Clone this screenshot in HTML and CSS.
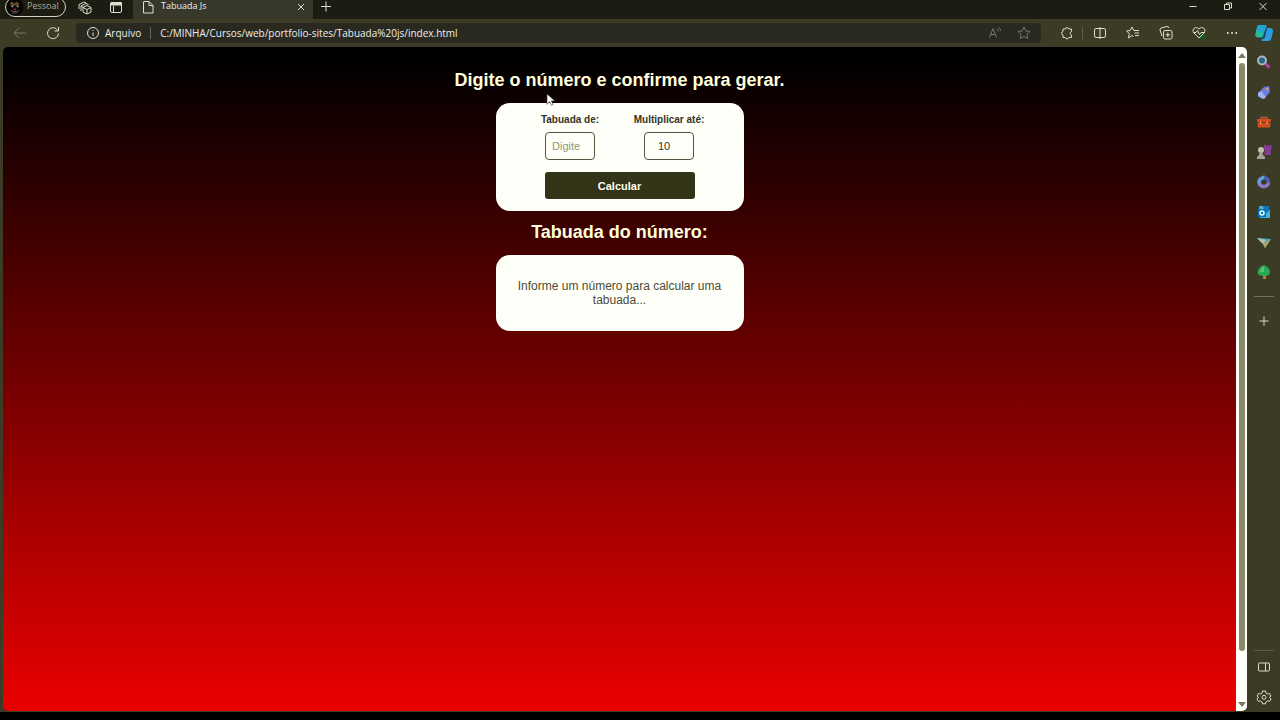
FILE: index.html
```html
<!DOCTYPE html>
<html lang="pt-BR">
<head>
<meta charset="utf-8">
<title>Tabuada Js</title>
<link rel="stylesheet" href="styles.css">
</head>
<body>
<header class="titlebar">
  <button class="profile" aria-label="Perfil Pessoal">
    <svg class="avatar" viewBox="0 0 20 20"><circle cx="10" cy="10" r="9.5" fill="#050505"/><path d="M4 6l3-2 2 2 3-2 3 3-2 2-3-1-3 2z" fill="#5d4a30"/><path d="M6 9l2 1M12 9l2 1" stroke="#b9b48a" stroke-width="1.300"/><path d="M8 12l2-.5 2 .5-1 1.500H9z" fill="#7c2430"/><path d="M5 14l3 1h4l3-1M7 16.500h6" fill="none" stroke="#62625a"/></svg>
    <span>Pessoal</span>
  </button>
  <button class="icon workspaces" aria-label="Espaços de trabalho"><svg viewBox="0 0 16 16"><path d="M6 7.500l4-2 4 2v4.500l-4 2-4-2zM6 7.500l4 2 4-2M10 9.500V14M4 11V6l5-2.500 2.500 1M2 9V4.500L7 2l2 .8M4 6l2 1.300"/></svg></button>
  <button class="icon tabs-menu" aria-label="Menu de guias"><svg viewBox="0 0 16 16"><rect x="2.500" y="2.500" width="11" height="10" rx="1.500"/><path d="M3 2.500h10.500v2.500H3z" fill="currentColor"/><path d="M5.500 6v6.500"/></svg></button>
  <div class="tab">
    <svg class="icon" viewBox="0 0 16 16"><path d="M4 1.500h5L13 5.500v7.500H3.500V1.500M9 1.500v4h4"/></svg>
    <span class="tab-name">Tabuada Js</span>
    <button class="icon" aria-label="Fechar guia"><svg viewBox="0 0 16 16"><path d="M5 4l6 6M11 4l-6 6"/></svg></button>
  </div>
  <button class="icon new-tab" aria-label="Nova guia"><svg viewBox="0 0 16 16"><path d="M8 1.500v10M3 6.500h10"/></svg></button>
  <div class="window-buttons">
    <button class="icon" aria-label="Minimizar"><svg viewBox="0 0 16 16"><path d="M4.500 6.500h7"/></svg></button>
    <button class="icon" aria-label="Restaurar"><svg viewBox="0 0 16 16"><path d="M4.500 4.500h5v5h-5zM6.500 4.500v-1.500h5v5h-2"/></svg></button>
    <button class="icon" aria-label="Fechar"><svg viewBox="0 0 16 16"><path d="M4.500 3l7 7M11.500 3l-7 7"/></svg></button>
  </div>
</header>

<div class="browser">
  <div class="content">
    <nav class="toolbar" aria-label="Navegação">
      <button class="icon dim" aria-label="Voltar"><svg viewBox="0 0 16 16"><path d="M14 8H2M7 3L2 8l5 5"/></svg></button>
      <button class="icon reload" aria-label="Atualizar"><svg viewBox="0 0 16 16"><path d="M12.800 5.500A5.500 5.500 0 1 0 13.500 8.500M13.500 2v4h-4"/></svg></button>
      <div class="address">
        <svg class="icon" viewBox="0 0 16 16"><circle cx="8" cy="8" r="5.500"/><path d="M8 7.500V11M8 5v1"/></svg>
        <span class="scheme">Arquivo</span>
        <input class="url" aria-label="Endereço" value="C:/MINHA/Cursos/web/portfolio-sites/Tabuada%20js/index.html">
        <button class="icon dim" aria-label="Ler em voz alta"><svg viewBox="0 0 16 16"><path d="M2.500 12.500L6 3.500l3.500 9M4 9.500h4M9.500 3.500q1.500 1 1.500 3M11.500 2q2 1.500 2 4"/></svg></button>
        <button class="icon dim" aria-label="Favoritar"><svg viewBox="0 0 16 16"><path d="M8 2l1.800 4 4.200.5-3.100 2.900.8 4.200L8 11.500l-3.700 2.100.8-4.200L2 6.500 6.200 6z"/></svg></button>
      </div>
      <div class="tools">
        <button class="icon" aria-label="Extensões"><svg viewBox="0 0 16 16"><path d="M4 4h2.300a1.800 1.800 0 0 1 3.500 0H12.500v2.500a1.800 1.800 0 0 0 0 3.500V12.500H9.800a1.800 1.800 0 0 1-3.500 0H4V10a1.800 1.800 0 0 1 0-3.500z"/></svg></button>
        <button class="icon split" aria-label="Tela dividida"><svg viewBox="0 0 16 16"><path d="M8 3.500H4q-1.500 0-1.500 1.500v6q0 1.500 1.500 1.500h8q1.500 0 1.500-1.500V5q0-1.500-1.500-1.500zM8 2v12"/></svg></button>
        <button class="icon" aria-label="Favoritos"><svg viewBox="0 0 16 16"><path d="M8.500 11.500l-1.500-1-3.500 2.500.8-4.500L1.500 6l3.700-.5L7 2l1.800 3.500H14M9.500 8H14M10 10.500h4"/></svg></button>
        <button class="icon" aria-label="Coleções"><svg viewBox="0 0 16 16"><rect x="5.500" y="5.500" width="8.500" height="8.500" rx="1.500"/><path d="M4 11L2 5q-.3-1.500 1-2l6-1.500q1.500-.3 2 1.500M9.800 7.500v4.500M7.500 9.800H12"/></svg></button>
        <button class="icon" aria-label="Desempenho"><svg viewBox="0 0 16 16"><circle cx="12" cy="12" r="3" fill="#185b20" stroke="none"/><path d="M8 13L3 8C0 4 5 .500 8 4c3-3.500 8 0 5 4L8 13M2.500 7.500H5l1.500-2 2 4 1.500-2h3.500"/></svg></button>
        <button class="icon" aria-label="Configurações e mais"><svg viewBox="0 0 16 16"><path d="M3 8h1.500M7.300 8h1.500M11.500 8H13" stroke-width="1.800"/></svg></button>
      </div>
    </nav>
    <div class="viewport">
      <main class="page">
        <h1 class="heading">Digite o número e confirme para gerar.</h1>
        <form class="card calculator">
          <div class="field"><label for="number">Tabuada de:</label><input id="number" type="text" placeholder="Digite"></div>
          <div class="field"><label for="limit">Multiplicar até:</label><input class="limit" id="limit" type="text" value="10"></div>
          <button class="calculate" type="button">Calcular</button>
        </form>
        <h2 class="heading">Tabuada do número:</h2>
        <section class="card result"><p>Informe um número para calcular uma tabuada...</p></section>
        <svg class="pointer" viewBox="0 0 10 16"><path d="M1 1v12l3-3 2 4 2-1-2-4h4z" fill="#fff" stroke="#333" stroke-width=".7"/></svg>
      </main>
      <div class="scrollbar" aria-hidden="true"><i class="arrow up"></i><i class="thumb"></i><i class="arrow down"></i></div>
    </div>
  </div>
  <aside class="sidebar" aria-label="Barra lateral">
    <button class="copilot" aria-label="Copilot"><svg viewBox="0 0 20 20"><path d="M5 2h6q2 0 1.500 2L10 12q-.7 2.500-3 2.500H4Q1 14.500 1.500 11L3 4q.5-2 2-2z" fill="#25a9c8"/><path d="M2 9l1.500-5.500Q4 2 6 2h5q1.500 0 1 2L9.500 10z" fill="#1fa3cf"/><path d="M1.500 11L3 7l6 4-1 3H4q-2.500 0-2.500-3z" fill="#27c08c"/><path d="M13 5h3.500q3 .5 2.500 3.500L17.500 15q-.7 3-3 3H9q-2 0-1.500-2h1q2 0 2.500-2z" fill="#2c9be0"/><path d="M11.500 6l1.700-1.500L10.500 14 8 16z" fill="#174b78"/></svg></button>
    <button class="app" aria-label="Pesquisar"><svg viewBox="0 0 16 16"><path d="M9.500 10l4 3.500" stroke="#b53aa8" stroke-width="3"/><circle cx="6" cy="6.500" r="4" fill="#286882" stroke="#a7b9bd" stroke-width="2"/></svg></button>
    <button class="app" aria-label="Compras"><svg viewBox="0 0 16 16"><path d="M2 9l6-6 5-1 1 6-5 6q-2 1-4 0L2 12z" fill="#7078df"/><path d="M2 9l3-2 5 6-2 2-3-1-3-2z" fill="#a0aef2"/><circle cx="11" cy="5" r="1.300" fill="#d0aa67"/></svg></button>
    <button class="app" aria-label="Ferramentas"><svg viewBox="0 0 16 16"><path d="M5 6V3.500h6V6" fill="none" stroke="#b4603e" stroke-width="1.500"/><path d="M1 5h14l-1 8.500H2z" fill="#d44d1f"/><path d="M1 8.500h14" stroke="#8f2711"/><path d="M4.500 7.500v2.500M11 7.500v2.500" stroke="#e2a472" stroke-width="1.300"/></svg></button>
    <button class="app" aria-label="Jogos"><svg viewBox="0 0 16 16"><path d="M8 1h2v1.500h1.500V1H13v1.500h1V1h1.500v4l-1 1 .5 5H8.500L9 6 8 5z" fill="#893b9c"/><circle cx="5" cy="6" r="3" fill="#bcc0ac"/><path d="M3.500 8h3l.5 3 2 2v2H1v-2l2-2z" fill="#a2a698"/></svg></button>
    <button class="app" aria-label="Microsoft 365"><svg viewBox="0 0 16 16"><g fill="none" stroke-width="3.500"><path d="M4 11Q1.500 7 5 4.500L9 3" stroke="#679ddd"/><path d="M8 3.500q4 .5 4.500 5" stroke="#4a62b8"/><path d="M12.500 8.500q0 3-4 4-3 .5-5-2.500" stroke="#8f78c8"/></g></svg></button>
    <button class="app" aria-label="Outlook"><svg viewBox="0 0 16 16"><path d="M3 2h10v4h1v8H4z" fill="#42b5dc"/><path d="M7 2h6v5l-4 3z" fill="#1475b8"/><path d="M2 5h8v8H2z" fill="#0871b8"/><circle cx="6" cy="9" r="2" fill="none" stroke="#e5ffff" stroke-width="1.500"/></svg></button>
    <button class="app" aria-label="Drop"><svg viewBox="0 0 16 16"><path d="M1 4l14 1-6 9-2-4z" fill="#47a4ca"/><path d="M1 4l9 2-3 4z" fill="#b7c5a4"/><path d="M7 10l8-5-6 9z" fill="#b9a457"/></svg></button>
    <button class="app" aria-label="Árvore"><svg viewBox="0 0 16 16"><path d="M7 10h3v5H7z" fill="#b77e35"/><path d="M8 1q6 3 6 7 0 4-6 4-6.500 0-6.500-4 1-5 6.500-7" fill="#2aa857"/><path d="M8 2q-4 3-4 6h4z" fill="#62c170"/></svg></button>
    <button class="icon customize" aria-label="Personalizar"><svg viewBox="0 0 16 16"><path d="M8 3.500v9M3.500 8h9"/></svg></button>
    <div class="sidebar-bottom">
      <button class="icon" aria-label="Ocultar barra lateral"><svg viewBox="0 0 16 16"><rect x="2.500" y="4" width="11" height="8" rx="1"/><path d="M9.500 4v8"/></svg></button>
      <button class="icon" aria-label="Configurações"><svg viewBox="0 0 16 16"><path d="M6.500 2h3l.5 2 1.500 1 2-.500L15 7l-1.500 1.200L15 10l-1.500 2.300-2-.5L10 13l-.5 1.800h-3L6 13l-1.500-1-2 .500L1 10l1.500-1.800L1 7l1.500-2.500 2 .5L6 4z"/><circle cx="8" cy="8.300" r="2"/></svg></button>
    </div>
  </aside>
</div>
</body>
</html>
```
FILE: styles.css
```css
* { box-sizing: border-box; }
body {
  margin: 0;
  height: 100vh;
  padding-bottom: 8px;
  display: flex;
  flex-direction: column;
  overflow: hidden;
  background: #000;
  color: #eee;
  font-family: "Open Sans", "Noto Sans", sans-serif;
  font-size: 10px;
}
button { padding: 0; border: 0; background: none; color: inherit; font: inherit; }
svg { display: block; width: 100%; height: 100%; }
.icon { flex: none; width: 16px; height: 16px; color: #ddddcf; fill: none; stroke: currentColor; }
.dim { color: #77776a; }

.titlebar { flex: none; display: flex; height: 19px; background: #1c1c13; }
.profile {
  display: flex;
  align-items: center;
  gap: 3px;
  width: 61px;
  height: 20px;
  margin: -3px 11px 0 5px;
  border: 1px solid #d3d3b9;
  border-radius: 10px;
  font-size: 9px;
  line-height: 12px;
  color: #aaa99a;
}
.profile span { padding-bottom: 2px; }
.avatar { width: 18px; height: 18px; }
.workspaces { margin-right: 15px; }
.tabs-menu { margin-right: 9px; }
.tab { display: flex; width: 180px; padding: 0 4px 0 7px; gap: 5px; background: #38382a; }
.tab-name { flex: 1; font-size: 9px; line-height: 12px; }
.new-tab { margin-left: 5px; }
.window-buttons { display: flex; gap: 19px; margin-left: auto; padding-right: 9px; }

.browser { flex: 1; min-height: 0; display: flex; background: #3b3b26; }
.content { flex: 1; min-width: 0; display: flex; flex-direction: column; }
.toolbar { flex: none; display: flex; align-items: center; height: 28px; padding-left: 12px; }
.reload { margin: 0 15px 0 17px; }
.address {
  flex: 1;
  display: flex;
  align-items: center;
  height: 20px;
  padding: 0 9px;
  border-radius: 4px;
  background: #292920;
}
.scheme { margin-left: 4px; padding-right: 9px; border-right: 1px solid #66665a; line-height: 12px; }
.url { flex: 1; min-width: 0; padding: 0 0 0 9px; border: 0; background: none; color: #eee; font: inherit; }
.address .dim + .dim { margin-left: 13px; }
.tools { display: flex; gap: 17px; padding: 0 7px 0 18px; }
.split { position: relative; }
.split::before { content: ""; position: absolute; left: -10px; top: 2px; height: 12px; border-left: 1px solid #5d5d4b; }

.viewport { flex: 1; min-height: 0; display: flex; margin: 0 0 1px 3px; overflow: hidden; border-radius: 5px; }
.page {
  position: relative;
  flex: 1;
  display: flex;
  flex-direction: column;
  align-items: center;
  padding-top: 22px;
  background: linear-gradient(#000 2%, #eb0000);
  font-family: "Liberation Sans", Arial, sans-serif;
}
.heading { margin: 0 0 12px; font-size: 18px; line-height: 22px; color: #ffffdc; }
.card { width: 248px; border-radius: 14px; background: #fffffa; color: #33331f; }
.calculator {
  display: grid;
  grid-template-columns: 1fr 1fr;
  row-gap: 12px;
  margin-bottom: 10px;
  padding: 11px 25px 12px;
}
.field { display: flex; flex-direction: column; align-items: center; gap: 6px; }
.field label { font-size: 10px; font-weight: bold; line-height: 12px; white-space: nowrap; }
.field input {
  width: 50px;
  height: 28px;
  padding: 0 6px;
  border: 1px solid #55553e;
  border-radius: 4px;
  background: #fffffa;
  color: #333321;
  font: 11px "Liberation Sans", Arial, sans-serif;
}
.field input::placeholder { color: #969667; opacity: 1; }
.field .limit { padding: 0 13px; }
.calculate { grid-column: 1 / -1; justify-self: center; width: 150px; height: 27px; border-radius: 3px; background: #333318; color: #fffff0; font-size: 11px; font-weight: bold; }
.result { padding: 24px 20px; font-size: 12px; line-height: 14px; text-align: center; }
.result p { margin: 0; color: #4c4c34; }
.pointer { position: absolute; left: 543px; top: 46px; width: 9px; height: 14px; }

.scrollbar { flex: none; display: flex; flex-direction: column; align-items: center; width: 11px; padding: 6px 0 4px; background: #fffffa; }
.arrow { border: 4px solid transparent; border-top-width: 0; border-bottom: 5px solid #77775e; }
.down { transform: rotate(180deg); }
.thumb { width: 6px; height: 588px; margin: 5px 0 auto; border-radius: 3px; background: #89896a; }

.sidebar { flex: none; display: flex; flex-direction: column; align-items: center; width: 33px; padding-top: 4px; }
.copilot { flex: none; width: 20px; height: 20px; margin-bottom: 11px; }
.app { flex: none; width: 16px; height: 16px; margin-bottom: 14px; }
.customize { position: relative; margin-top: 19px; }
.customize::before { content: ""; position: absolute; left: -2px; top: -17px; width: 20px; border-top: 1px solid #71715e; }
.sidebar-bottom { display: flex; flex-direction: column; gap: 14px; margin-top: auto; padding: 8px 2px 7px; border-top: 1px solid #5d5d4d; }
```
